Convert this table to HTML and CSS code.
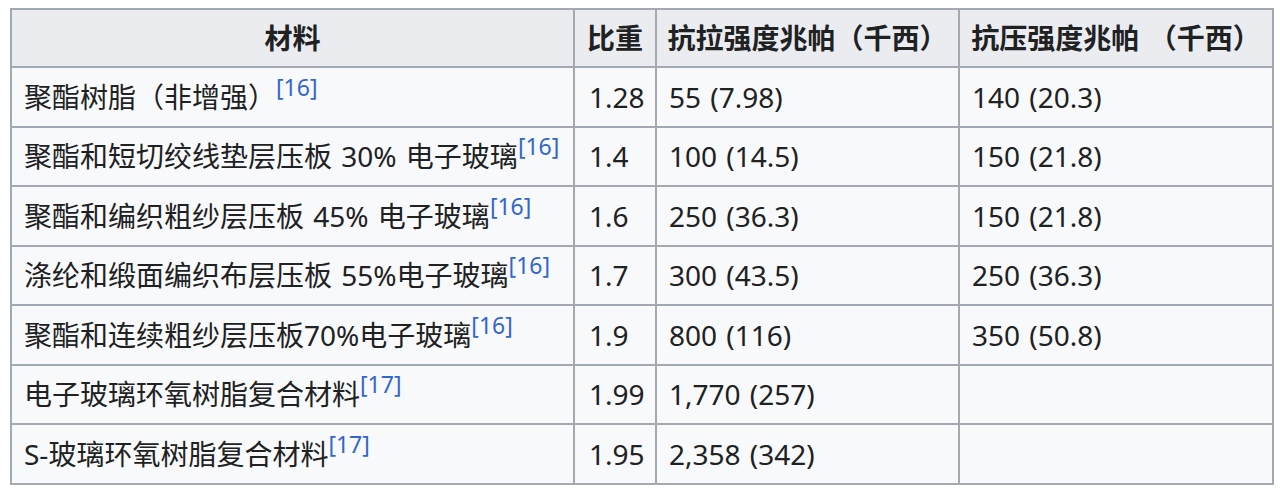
FILE: index.html
```html
<!DOCTYPE html>
<html lang="zh">
<head>
<meta charset="utf-8">
<link rel="stylesheet" href="styles.css">
</head>
<body>
<div class="page">
<table class="wikitable">
  <colgroup>
    <col class="c1"><col class="c2"><col class="c3"><col class="c4">
  </colgroup>
  <thead>
    <tr>
      <th>材料</th>
      <th>比重</th>
      <th>抗拉强度兆帕（千西）</th>
      <th>抗压强度兆帕 （千西）</th>
    </tr>
  </thead>
  <tbody>
    <tr><td>聚酯树脂（非增强）<sup class="ref">[16]</sup></td><td>1.28</td><td>55 (7.98)</td><td>140 (20.3)</td></tr>
    <tr><td>聚酯和短切绞线垫层压板 30% 电子玻璃<sup class="ref">[16]</sup></td><td>1.4</td><td>100 (14.5)</td><td>150 (21.8)</td></tr>
    <tr><td>聚酯和编织粗纱层压板 45% 电子玻璃<sup class="ref">[16]</sup></td><td>1.6</td><td>250 (36.3)</td><td>150 (21.8)</td></tr>
    <tr><td>涤纶和缎面编织布层压板 55%电子玻璃<sup class="ref">[16]</sup></td><td>1.7</td><td>300 (43.5)</td><td>250 (36.3)</td></tr>
    <tr><td>聚酯和连续粗纱层压板70%电子玻璃<sup class="ref">[16]</sup></td><td>1.9</td><td>800 (116)</td><td>350 (50.8)</td></tr>
    <tr><td>电子玻璃环氧树脂复合材料<sup class="ref">[17]</sup></td><td>1.99</td><td>1,770 (257)</td><td></td></tr>
    <tr><td>S-玻璃环氧树脂复合材料<sup class="ref">[17]</sup></td><td>1.95</td><td>2,358 (342)</td><td></td></tr>
  </tbody>
</table>
</div>
</body>
</html>
```
FILE: styles.css
```css
html, body {
  margin: 0;
  padding: 0;
  background: #ffffff;
}
.page {
  padding: 8px 0 0 10px;
}
.wikitable {
  border-collapse: collapse;
  table-layout: fixed;
  width: 1262px;
  background: #f8f9fa;
  color: #202122;
  font-family: "Noto Sans", "Noto Sans CJK SC", sans-serif;
  font-size: 28px;
  word-spacing: 2px;
  border: 2px solid #a2a9b1;
}
.c1 { width: 563px; }
.c2 { width: 82px; }
.c3 { width: 303px; }
.c4 { width: 314px; }
.wikitable th,
.wikitable td {
  border: 2px solid #a2a9b1;
  padding: 0 12px;
  line-height: 36px;
  white-space: nowrap;
  vertical-align: middle;
}
.wikitable th {
  background: #eaecf0;
  font-weight: bold;
  text-align: center;
  height: 56px;
  padding: 0 4px;
}
.wikitable td {
  text-align: left;
  height: 57.5px;
}
.wikitable td:nth-child(2) {
  padding-left: 14px;
  padding-right: 4px;
}
.ref {
  color: #3366cc;
  font-size: 23px;
  word-spacing: 0;
  line-height: 0;
  vertical-align: 12px;
}
```
